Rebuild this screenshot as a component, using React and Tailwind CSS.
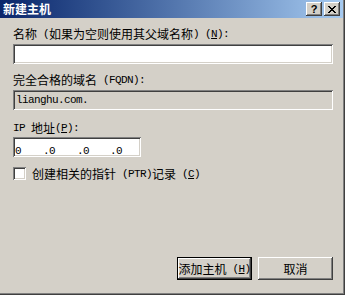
import React from "react";

/* ASCII runs: SimSun-like 6px cells */
function A({ children, className = "" }) {
  return (
    <span className={`font-['Liberation_Mono',monospace] text-[11px] tracking-[-0.6px] ${className}`}>
      {children}
    </span>
  );
}

const raised =
  "shadow-[inset_-1px_-1px_#404040,inset_1px_1px_#ffffff,inset_-2px_-2px_#808080,inset_2px_2px_#d4d0c8]";
const sunken =
  "shadow-[inset_1px_1px_#808080,inset_-1px_-1px_#ffffff,inset_2px_2px_#404040,inset_-2px_-2px_#d4d0c8]";

function CaptionButton({ children }) {
  return (
    <div className={`w-[16px] h-[14px] bg-[#d4d0c8] flex items-center justify-center ${raised}`}>
      {children}
    </div>
  );
}

function Label({ children, className = "" }) {
  return <div className={`h-[12px] leading-[12px] text-[12px] flex items-center ${className}`}>{children}</div>;
}

export default function App() {
  return (
    <div className="w-[347px] h-[296px] bg-white font-['Noto_Sans_CJK_SC',sans-serif] text-black">
      <div className="w-[345px] h-[295px] bg-[#d4d0c8] border-r border-b border-r-[#404040] border-b-[#404040] flex flex-col">
        <div className="w-[344px] h-[294px] border-r border-b border-[#808080] flex flex-col">
          {/* Title bar */}
          <div className="h-[18px] w-[343px] bg-linear-to-r from-[#0a246a] to-[#a6caf0] flex items-center pl-[3px] pr-[3px]">
            <span className="text-white font-bold text-[12px] leading-[12px]">新建主机</span>
            <div className="ml-auto flex gap-[2px]">
              <CaptionButton>
                <span className="font-['Liberation_Sans',sans-serif] font-bold text-[11px] leading-[11px]">?</span>
              </CaptionButton>
              <CaptionButton>
                <svg width="8" height="7" viewBox="0 0 8 7" shapeRendering="crispEdges">
                  <path d="M0 0h2v1h-2zM6 0h2v1h-2zM1 1h2v1h-2zM5 1h2v1h-2zM2 2h4v1h-4zM3 3h2v1h-2zM2 4h4v1h-4zM1 5h2v1h-2zM5 5h2v1h-2zM0 6h2v1h-2zM6 6h2v1h-2z" fill="#000" />
                </svg>
              </CaptionButton>
            </div>
          </div>

          {/* Body */}
          <div className="pl-[13px] flex flex-col">
            <Label className="mt-[10px]">
              名称<A>&nbsp;(</A>如果为空则使用其父域名称<A>)&nbsp;(<span className="underline">N</span>):</A>
            </Label>
            <div className={`mt-[4px] w-[320px] h-[20px] bg-white ${sunken}`}></div>

            <Label className="mt-[10px]">
              完全合格的域名<A>&nbsp;(FQDN):</A>
            </Label>
            <div className={`mt-[4px] w-[320px] h-[20px] bg-[#d4d0c8] flex items-center pl-[3px] ${sunken}`}>
              <A>lianghu.com.</A>
            </div>

            <Label className="mt-[12px]">
              <A>IP&nbsp;</A>地址<A>(<span className="underline">P</span>):</A>
            </Label>
            <div className={`mt-[3px] w-[128px] h-[20px] bg-white flex items-center pl-[2px] ${sunken}`}>
              <span className="w-[28px]"><A>0</A></span>
              <span className="w-[34px]"><A>.0</A></span>
              <span className="w-[33px]"><A>.0</A></span>
              <span><A>.0</A></span>
            </div>

            <div className="mt-[10px] flex items-center h-[13px]">
              <div className={`w-[13px] h-[13px] bg-white ${sunken}`}></div>
              <Label className="ml-[6px]">
                创建相关的指针<A>&nbsp;(PTR)</A>记录<A>&nbsp;(<span className="underline">C</span>)</A>
              </Label>
            </div>

            <div className="mt-[77px] flex justify-end gap-[6px] w-[320px]">
              <button className={`w-[75px] h-[23px] bg-[#d4d0c8] border border-black text-[12px] leading-[12px] flex items-center justify-center shadow-[inset_-1px_-1px_#404040,inset_1px_1px_#ffffff,inset_-2px_-2px_#808080]`}>
                添加主机<A>&nbsp;(<span className="underline">H</span>)</A>
              </button>
              <button className={`w-[75px] h-[23px] bg-[#d4d0c8] text-[12px] leading-[12px] flex items-center justify-center ${raised}`}>
                取消
              </button>
            </div>
          </div>
        </div>
      </div>
    </div>
  );
}
